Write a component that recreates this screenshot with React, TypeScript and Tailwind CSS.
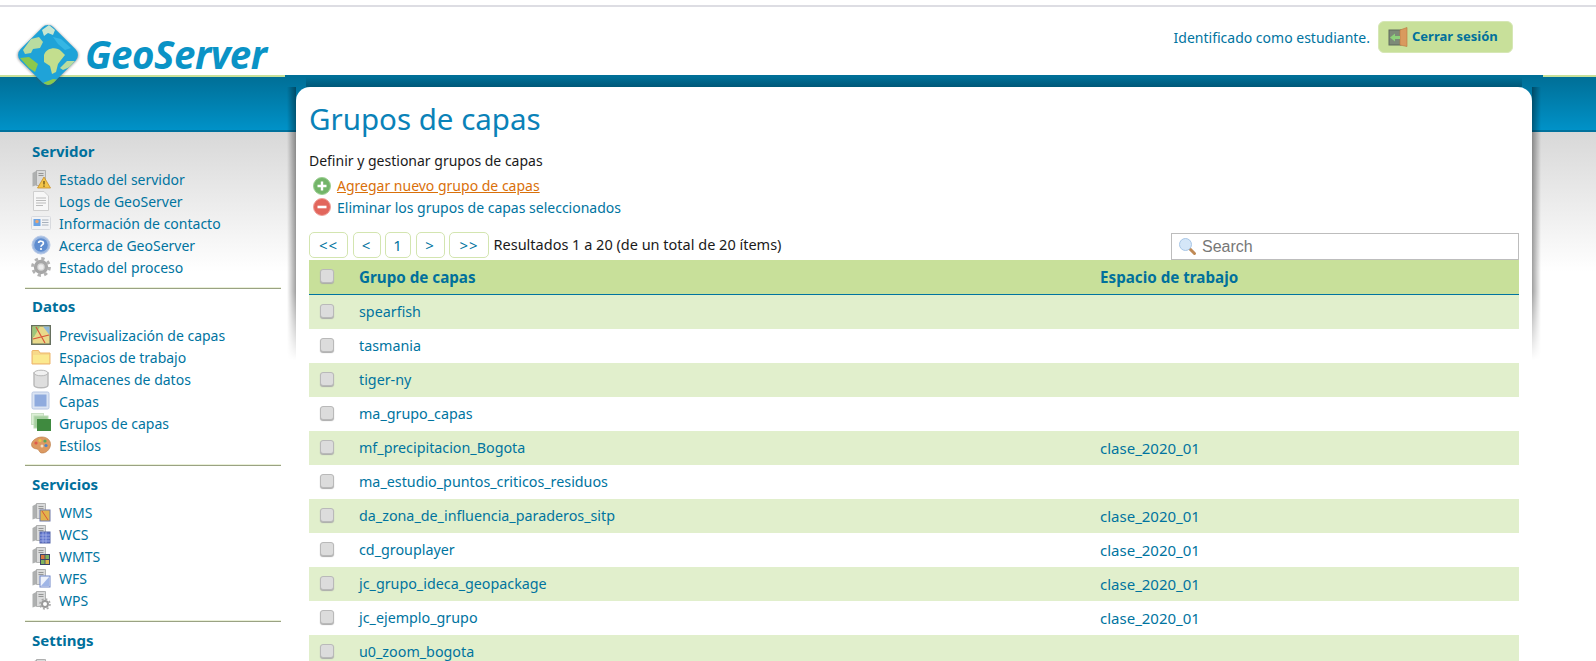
import React from 'react';

const FONT = "font-['Noto_Sans',Tahoma,sans-serif]";

const ServerBase = () => (
  <g>
    <path d="M1.5 4 L6 1.5 H13 V16 H6 L1.5 17.5 Z" fill="#aeb0b0" />
    <path d="M5.5 1.5 H14.5 V16.5 H5.5 Z" fill="#d9dada" stroke="#a3a5a5" strokeWidth="0.8" />
    <path d="M7.5 4.5 H12.5 M7.5 6.5 H12.5" stroke="#8e9090" strokeWidth="0.9" />
  </g>
);

const Ico = ({ children }: { children: React.ReactNode }) => (
  <svg width="20" height="20" viewBox="0 0 20 20" className="shrink-0">
    {children}
  </svg>
);

const icons: Record<string, React.ReactNode> = {
  status: (
    <Ico>
      <ServerBase />
      <path d="M13 8 L19.5 19 H6.5 Z" fill="#f3c54a" stroke="#c98f28" strokeWidth="0.8" />
      <path d="M13 12 V15.5 M13 16.6 V17.8" stroke="#5b4310" strokeWidth="1.2" />
    </Ico>
  ),
  logs: (
    <Ico>
      <path d="M2.5 0.5 H13 L17.5 5 V19.5 H2.5 Z" fill="#f7f7f7" stroke="#cfcfcf" />
      <path d="M5 7 H15 M5 9.5 H15 M5 12 H15 M5 14.5 H12" stroke="#bbbbbb" />
    </Ico>
  ),
  contact: (
    <Ico>
      <rect x="0.5" y="3.5" width="19" height="13" rx="1" fill="#f2f3f5" stroke="#d8dade" />
      <rect x="2.5" y="6" width="7" height="7" fill="#6ba3e4" />
      <circle cx="6" cy="8.5" r="1.7" fill="#e9a56f" />
      <path d="M11 7 H17.5 M11 9.5 H17.5 M11 12 H17.5" stroke="#a7b0bc" />
    </Ico>
  ),
  about: (
    <Ico>
      <circle cx="10" cy="10" r="9" fill="#9db8e0" stroke="#b8cae8" />
      <circle cx="10" cy="10" r="6.8" fill="#5f8dd0" />
      <path d="M7.6 8 C7.8 5.6 12.4 5.6 12.4 8.2 C12.4 10 10 9.8 10 11.8" fill="none" stroke="#fff" strokeWidth="1.7" />
      <circle cx="10" cy="14" r="1.1" fill="#fff" />
    </Ico>
  ),
  process: (
    <Ico>
      <circle cx="10" cy="10" r="5.5" fill="#d4d4d4" stroke="#a6a6a6" strokeWidth="3.4" />
      <circle cx="10" cy="10" r="8.4" fill="none" stroke="#b2b2b2" strokeWidth="3" strokeDasharray="3.3 3.3" />
      <circle cx="10" cy="10" r="2.6" fill="#ececec" />
    </Ico>
  ),
  preview: (
    <Ico>
      <rect x="0.75" y="0.75" width="18.5" height="18.5" fill="#e8d98a" stroke="#66705f" strokeWidth="1.5" />
      <path d="M1.5 1.5 H9 L3 12 H1.5 Z" fill="#9cc77a" />
      <path d="M12 1.5 H18.5 V10 Z" fill="#8fb7d8" />
      <path d="M5 2 L14 18 M2 14 L18 10" stroke="#d8553a" strokeWidth="1.2" />
    </Ico>
  ),
  workspace: (
    <Ico>
      <path d="M1 4 V17 H19 V6 H9 L7.5 3.5 H1.5 Z" fill="#f7d98a" stroke="#eeb56a" />
      <path d="M2 8 H18 V16 H2 Z" fill="#fbe98f" />
    </Ico>
  ),
  stores: (
    <Ico>
      <path d="M3 4 V16 C3 19.6 17 19.6 17 16 V4 Z" fill="#dedede" stroke="#b8b8b8" strokeWidth="1.4" />
      <ellipse cx="10" cy="4" rx="7" ry="2.8" fill="#f1f1f1" stroke="#b8b8b8" />
    </Ico>
  ),
  layers: (
    <Ico>
      <rect x="1" y="1" width="17" height="17" rx="1.5" fill="#dbe4f3" stroke="#b7c6e2" />
      <rect x="3.5" y="3.5" width="12" height="12" fill="#8fabde" />
    </Ico>
  ),
  groups: (
    <Ico>
      <rect x="0.5" y="0.5" width="12" height="11" fill="#dcefd6" stroke="#c9dfc4" />
      <rect x="3" y="3" width="14" height="12" fill="#a6cfa0" stroke="#bcdcb6" />
      <rect x="6" y="6" width="14" height="12" fill="#3f8a3f" />
    </Ico>
  ),
  styles: (
    <Ico>
      <path d="M10 2 C16 1.5 20 5.5 19.5 10 C19 15 14.5 18.5 10.5 18 C8 17.7 8.5 14.5 6 14 C3 13.7 0.5 12.5 0.5 9.5 C0.5 6 5 2.4 10 2 Z" fill="#dc9a62" stroke="#b97a45" strokeWidth="0.6" />
      <circle cx="5" cy="8" r="1.6" fill="#e05a4a" />
      <circle cx="9" cy="5.5" r="1.6" fill="#e8c64a" />
      <circle cx="14" cy="6" r="1.6" fill="#5aa85a" />
      <circle cx="15" cy="10.5" r="1.6" fill="#4a85c8" />
      <circle cx="11" cy="11" r="1.5" fill="#f2ddc5" />
    </Ico>
  ),
  wms: (
    <Ico>
      <ServerBase />
      <rect x="9" y="8" width="10" height="11" fill="#e2b44c" stroke="#6f78a8" />
      <path d="M11 9 L17 18" stroke="#d8553a" />
    </Ico>
  ),
  wcs: (
    <Ico>
      <ServerBase />
      <rect x="9" y="8" width="10" height="11" fill="#5f74cc" stroke="#5565a8" />
      <path d="M9 11 H19 M9 14 H19 M9 17 H19 M12 8 V19 M15 8 V19" stroke="#aab6ea" strokeWidth="0.8" />
    </Ico>
  ),
  wmts: (
    <Ico>
      <ServerBase />
      <rect x="9" y="8" width="10" height="11" fill="#3e4668" />
      <rect x="10" y="9" width="3.6" height="4" fill="#d9783f" />
      <rect x="14.4" y="9" width="3.6" height="4" fill="#7db35e" />
      <rect x="10" y="14" width="3.6" height="4" fill="#7db35e" />
      <rect x="14.4" y="14" width="3.6" height="4" fill="#d8b44c" />
    </Ico>
  ),
  wfs: (
    <Ico>
      <ServerBase />
      <rect x="9" y="8" width="10" height="11" fill="#eef2fb" stroke="#6f86c8" />
      <path d="M10 18 H18 V9 Z" fill="#9fb5e6" />
    </Ico>
  ),
  wps: (
    <Ico>
      <ServerBase />
      <circle cx="14" cy="14" r="3" fill="#fff" stroke="#9a9a9a" strokeWidth="2" />
      <circle cx="14" cy="14" r="5" fill="none" stroke="#a8a8a8" strokeWidth="1.6" strokeDasharray="2 1.9" />
    </Ico>
  ),
  global: (
    <Ico>
      <ServerBase />
    </Ico>
  ),
};

const sections = [
  {
    title: 'Servidor',
    items: [
      ['status', 'Estado del servidor'],
      ['logs', 'Logs de GeoServer'],
      ['contact', 'Información de contacto'],
      ['about', 'Acerca de GeoServer'],
      ['process', 'Estado del proceso'],
    ],
  },
  {
    title: 'Datos',
    items: [
      ['preview', 'Previsualización de capas'],
      ['workspace', 'Espacios de trabajo'],
      ['stores', 'Almacenes de datos'],
      ['layers', 'Capas'],
      ['groups', 'Grupos de capas'],
      ['styles', 'Estilos'],
    ],
  },
  {
    title: 'Servicios',
    items: [
      ['wms', 'WMS'],
      ['wcs', 'WCS'],
      ['wmts', 'WMTS'],
      ['wfs', 'WFS'],
      ['wps', 'WPS'],
    ],
  },
  {
    title: 'Settings',
    items: [['global', '']],
  },
];

const rows = [
  ['spearfish', ''],
  ['tasmania', ''],
  ['tiger-ny', ''],
  ['ma_grupo_capas', ''],
  ['mf_precipitacion_Bogota', 'clase_2020_01'],
  ['ma_estudio_puntos_criticos_residuos', ''],
  ['da_zona_de_influencia_paraderos_sitp', 'clase_2020_01'],
  ['cd_grouplayer', 'clase_2020_01'],
  ['jc_grupo_ideca_geopackage', 'clase_2020_01'],
  ['jc_ejemplo_grupo', 'clase_2020_01'],
  ['u0_zoom_bogota', ''],
];

const pages = [
  { label: '<<', w: 'w-[39px]' },
  { label: '<', w: 'w-[28px]' },
  { label: '1', w: 'w-[26px]' },
  { label: '>', w: 'w-[29px]' },
  { label: '>>', w: 'w-[40px]' },
];

const Logo = () => (
  <div className="absolute left-[15px] top-[22px] z-10 flex items-start">
    <svg width="66" height="66" viewBox="0 0 66 66" className="shrink-0">
      <defs>
        <filter id="logoBlur">
          <feGaussianBlur stdDeviation="1.2" />
        </filter>
        <clipPath id="logoClip">
          <rect x="9.5" y="9.5" width="47" height="47" rx="8" transform="rotate(45 33 33)" />
        </clipPath>
      </defs>
      <rect x="9" y="9.5" width="48" height="48" rx="8" transform="rotate(45 33 33.5)" fill="#555" opacity="0.5" filter="url(#logoBlur)" />
      <g clipPath="url(#logoClip)">
        <rect width="66" height="66" fill="#1fa3d8" />
        <path d="M27 8 L34 3 L40 8 L38 13 L33 11 L29 14 Z" fill="#c8e6d0" />
        <path d="M8 28 L16 17 L24 15 L28 20 L25 26 L18 27 L16 31 L10 32 Z" fill="#b9dca0" />
        <path d="M5 36 L14 35 L23 42 L20 50 L14 46 Z" fill="#8cc84c" />
        <path d="M29 33 C32 25 42 25 46 29 L50 33 L46 38 L43 42 L41 50 L37 52 L35 44 L29 40 Z" fill="#c3de8e" />
        <path d="M45 46 L52 39 L60 39 L55 45 L48 48 Z" fill="#b9dca0" />
        <path d="M28 61 L38 57 L46 58 L38 66 Z" fill="#8cc84c" />
        <path d="M38 15 L46 17 L56 26 L50 28 L43 22 Z" fill="#35b6e4" />
      </g>
    </svg>
    <span className="ml-[4px] mt-[7px] font-['Noto_Sans',sans-serif] text-[38.5px] font-bold italic leading-[50px] tracking-[-0.5px] text-[#0a93c6]">
      GeoServer
    </span>
  </div>
);

const Checkbox = () => (
  <input
    type="checkbox"
    readOnly
    className="h-[14px] w-[14px] appearance-none rounded-[3px] border border-[#b9b9b9] bg-[#dcdcdc] shadow-[0_1px_1px_#aaa]"
  />
);

export default function App() {
  return (
    <div className={`relative h-[661px] overflow-hidden bg-white ${FONT} text-[14px] text-[#00749f]`}>
      {/* Header */}
      <header className="relative h-[75px] bg-white pt-[5px]">
        <div className="h-[2px] bg-[#dddde3]" />
        <Logo />
        <div className="flex justify-end pr-[83px] pt-[14px]">
          <div className="flex items-center">
            <span className="mr-[8px]">Identificado como estudiante.</span>
            <button className="flex h-[32px] w-[135px] items-center rounded-[6px] border border-[#d6e7b5] bg-[#c8e09a] pl-[9px] text-[13px] font-bold text-[#00709c]">
              <svg width="20" height="20" viewBox="0 0 20 20" className="mr-[4px] shrink-0">
                <rect x="1" y="3" width="12" height="15" fill="#7d8a78" stroke="#5f6b5c" />
                <path d="M12 3 L19 0.5 V19.5 L12 18 Z" fill="#d99a5e" stroke="#b9763c" strokeWidth="0.6" />
                <path d="M2 10.5 L7 6.5 V9 H12 V12 H7 V14.5 Z" fill="#8ed07a" />
              </svg>
              Cerrar sesión
            </button>
          </div>
        </div>
      </header>

      {/* Green line, interrupted above the panel */}
      <div className="flex h-[2px]">
        <div className="w-[285px] bg-[#c8e09a]" />
        <div className="flex-1 bg-[#006f97]" />
        <div className="w-[53px] bg-[#c8e09a]" />
      </div>

      {/* Blue band */}
      <div className="h-[55px] border-b-2 border-[#00719c] bg-gradient-to-b from-[#006f97] to-[#0092c8]" />

      <div className="flex bg-gradient-to-b from-[#d8d8d8] to-white to-[140px]">
        {/* Sidebar */}
        <aside className="w-[296px] shrink-0 pl-[25px] pr-[15px] pt-[1px]">
          {sections.map((section, i) => (
            <div key={section.title}>
              <h3 className={`ml-[7px] h-[22px] text-[15px] font-bold leading-[22px] text-[#00709c] ${i === 1 ? 'mt-[6px] mb-[7px]' : 'mt-[7px] mb-[6px]'}`}>
                {section.title}
              </h3>
              <ul>
                {section.items.map(([icon, label]) => (
                  <li key={icon} className="ml-[6px] flex h-[22px] items-center gap-[8px]">
                    {icons[icon]}
                    <a>{label}</a>
                  </li>
                ))}
              </ul>
              {i < sections.length - 1 && (
                <div className={`h-[2px] border-b border-[#9aa283] bg-[#eaf0d8] ${i === 1 ? 'mt-[8px]' : 'mt-[9px]'}`} />
              )}
            </div>
          ))}
        </aside>

        {/* Main panel */}
        <main className="relative z-[5] -mt-[45px] w-[1236px] shrink-0 self-start rounded-t-[14px] bg-white px-[13px] pb-0 pt-[10px]">
          <div className="absolute -top-[10px] left-[10px] right-[10px] h-[10px] bg-gradient-to-b from-transparent to-[#00000040]" />
          <div className="absolute -left-[9px] top-[0px] h-[273px] w-[9px] bg-gradient-to-r from-transparent to-[#00000060] [mask-image:linear-gradient(to_bottom,black_75%,transparent)]" />
          <div className="absolute -right-[9px] top-[0px] h-[273px] w-[9px] bg-gradient-to-l from-transparent to-[#00000060] [mask-image:linear-gradient(to_bottom,black_75%,transparent)]" />

          <h1 className="h-[44px] text-[29.5px] font-normal leading-[44px] text-[#0a82b8]">Grupos de capas</h1>
          <p className="mt-[10px] h-[20px] leading-[20px] text-[#1a1a1a]">Definir y gestionar grupos de capas</p>
          <ul className="mt-[4px]">
            <li className="ml-[4px] flex h-[21px] items-center gap-[6px]">
              <svg width="18" height="18" viewBox="0 0 18 18" className="shrink-0">
                <circle cx="9" cy="9" r="8.5" fill="#73b569" stroke="#9ccf92" />
                <path d="M9 4.5 V13.5 M4.5 9 H13.5" stroke="#fff" strokeWidth="2.4" />
              </svg>
              <a className="text-[#d9700a] underline">Agregar nuevo grupo de capas</a>
            </li>
            <li className="ml-[4px] flex h-[22px] items-center gap-[6px]">
              <svg width="18" height="18" viewBox="0 0 18 18" className="shrink-0">
                <circle cx="9" cy="9" r="8.5" fill="#e2665c" stroke="#efa09a" />
                <path d="M4.5 9 H13.5" stroke="#fff" strokeWidth="2.6" />
              </svg>
              <a>Eliminar los grupos de capas seleccionados</a>
            </li>
          </ul>

          {/* Pager and search */}
          <div className="relative mt-[13px] flex h-[29px] items-start">
            <div className="mt-[1px] flex items-center">
              {pages.map((page) => (
                <button
                  key={page.label}
                  className={`mr-[4.5px] h-[26px] rounded-[5px] border border-[#d3e5b0] bg-white text-center text-[15px] leading-[22px] tracking-[1px] text-[#00749f] ${page.w}`}
                >
                  {page.label}
                </button>
              ))}
              <span className="text-[14.5px] text-[#1a1a1a]">Resultados 1 a 20 (de un total de 20 ítems)</span>
            </div>
            <div className="ml-auto mt-[2px] flex h-[27px] w-[348px] items-center border border-[#bdbdbd] bg-white pl-[6px]">
              <svg width="19" height="19" viewBox="0 0 19 19" className="shrink-0">
                <path d="M11.5 11.5 L16.5 16.5" stroke="#c08a55" strokeWidth="3" strokeLinecap="round" />
                <circle cx="7.5" cy="7.5" r="6" fill="#d4e6f8" stroke="#a8c6e6" />
              </svg>
              <input
                placeholder="Search"
                className="ml-[5px] min-w-0 flex-1 bg-transparent font-['Liberation_Sans',Arial,sans-serif] text-[16px] outline-none placeholder:text-[#777]"
              />
            </div>
          </div>

          {/* Table */}
          <table className="w-[1210px] table-fixed border-separate border-spacing-0">
            <thead>
              <tr className="h-[35px] bg-[#c8e09a]">
                <th className="w-[50px] border-b border-[#00749f] pl-[11px] text-left align-middle leading-none"><Checkbox /></th>
                <th className="w-[741px] border-b border-[#00749f] text-left text-[15.2px] font-bold text-[#00709c]">Grupo de capas</th>
                <th className="border-b border-[#00749f] text-left text-[15.2px] font-bold text-[#00709c]">Espacio de trabajo</th>
              </tr>
            </thead>
            <tbody>
              {rows.map(([name, workspace], i) => (
                <tr key={name} className={`h-[34px] ${i % 2 === 0 ? 'bg-[#e1efcc]' : 'bg-white'}`}>
                  <td className="pl-[11px] align-middle leading-none"><Checkbox /></td>
                  <td className="text-[14.3px]">{name}</td>
                  <td className="text-[15px]">{workspace}</td>
                </tr>
              ))}
            </tbody>
          </table>
        </main>
      </div>
    </div>
  );
}
